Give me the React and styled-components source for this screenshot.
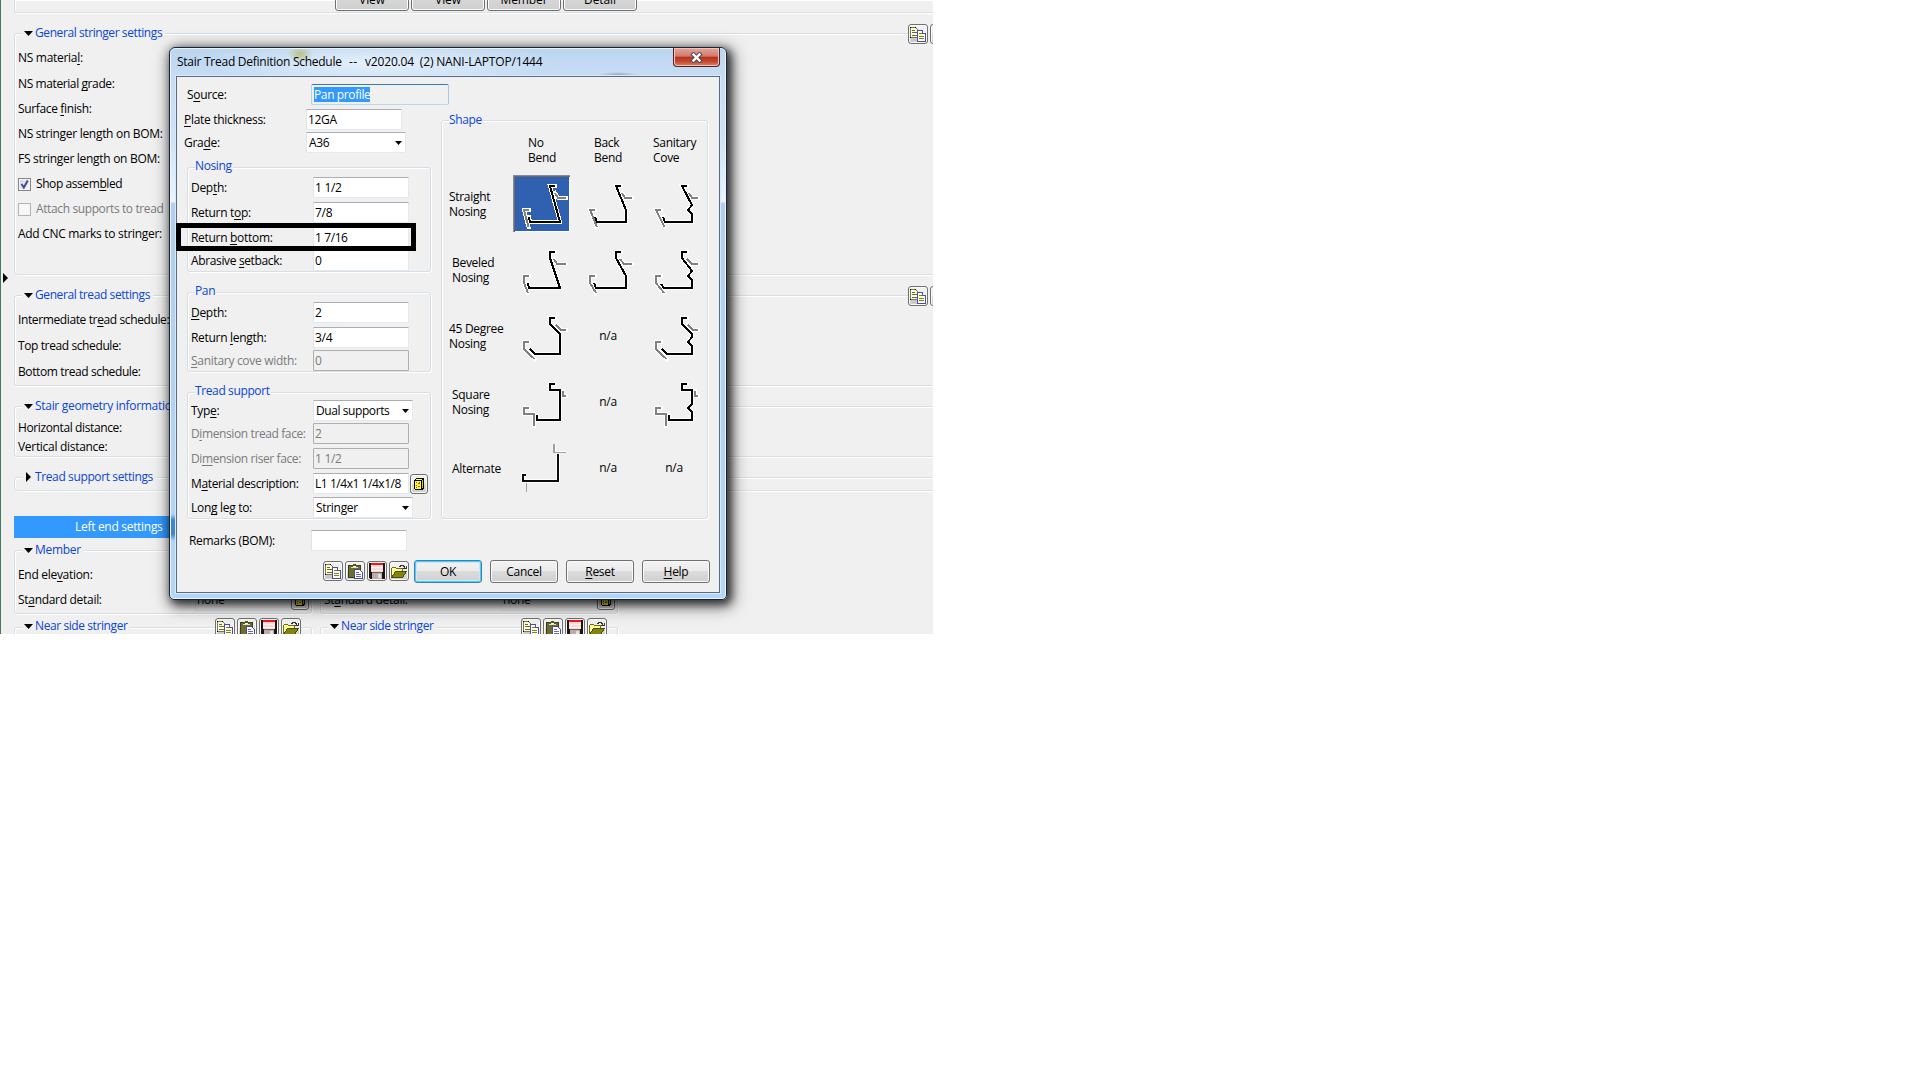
import React from "react";
import styled, { createGlobalStyle, css } from "styled-components";

const Global = createGlobalStyle`
  body { margin: 0; background: #fff; }
  #root, #root * { box-sizing: border-box; }
`;

const AppWindow = styled.main`
  position: relative;
  display: flex;
  width: 933px;
  height: 634px;
  overflow: hidden;
  background: #f0f0f0;
  border-left: 1px solid #43795c;
  font-family: "Open Sans", "Noto Sans", sans-serif;
  font-size: 12px;
  line-height: 16px;
  letter-spacing: -0.3px;
  color: #000;
  white-space: pre;
`;

const Gutter = styled.div`
  flex: 0 0 13px;
  padding: 273px 0 0 2px;
  svg { display: block; }
`;

const Content = styled.div`
  flex: 0 0 986px;
  display: flex;
  flex-direction: column;
`;

const Group = styled.section`
  flex: none;
  width: ${(p) => (p.$w ? p.$w + "px" : "auto")};
  height: ${(p) => p.$h}px;
  margin-top: ${(p) => p.$mt || 0}px;
  margin-left: ${(p) => p.$ml || 0}px;
  border: 1px solid #d5dfe5;
  border-radius: 3px;
  box-shadow: 1px 1px 0 #fff, inset 1px 1px 0 #fff;
`;

const TopPanel = styled(Group)`
  display: flex;
  align-items: flex-end;
  gap: 2px;
  border-top: 0;
  border-top-left-radius: 0;
  padding: 0 0 1px 320px;
`;

const LegendRow = styled.header`
  display: flex;
  align-items: flex-start;
  width: ${(p) => p.$w}px;
  height: 20px;
  margin-top: -10px;
`;

const SectionTitle = styled.h3`
  display: flex;
  align-items: center;
  height: ${(p) => (p.$raised ? 16 : 18)}px;
  margin: 0 0 0 7px;
  padding: 0 3px 0 2px;
  background: #f0f0f0;
  color: #0a46d5;
  font: inherit;
  letter-spacing: ${(p) => (p.$ls === undefined ? -0.41 : p.$ls)}px;
  svg { flex: none; margin-right: 2px; }
`;

const Tools = styled.div`
  display: flex;
  gap: 2px;
  margin-left: auto;
  background: #f0f0f0;
`;

const Legend = styled.h3`
  width: max-content;
  height: 16px;
  margin: ${(p) => p.$top}px 0 0 7px;
  padding: 0 1px 0 0;
  background: #f0f0f0;
  color: #0a46d5;
  font: inherit;
  letter-spacing: -0.38px;
`;

const Line = styled.div`
  display: flex;
  align-items: center;
  height: 16px;
  margin-top: ${(p) => p.$mt}px;
  padding-left: 3px;
  color: ${(p) => (p.$off ? "#7b7b7b" : "#000")};
`;

const Caption = styled.span`
  flex: none;
  width: ${(p) => (p.$w ? p.$w + "px" : "auto")};
  letter-spacing: ${(p) => (p.$ls === undefined ? "inherit" : p.$ls + "px")};
  color: ${(p) => (p.$off ? "#7b7b7b" : "inherit")};
  u { text-decoration-thickness: 1px; text-underline-offset: 2px; text-decoration-skip-ink: none; }
`;

const CheckBox = styled.span`
  display: flex;
  flex: none;
  width: 13px;
  height: 13px;
  margin-right: 5px;
  border: 1px solid ${(p) => (p.$off ? "#b4b4b4" : "#868788")};
  background: ${(p) => (p.$off ? "#f8f8f8" : "linear-gradient(135deg, #d2d6da, #fbfbfb)")};
  box-shadow: inset 0 0 0 1px #f4f4f4;
`;

const buttonFace = css`
  border: 1px solid #707070;
  border-radius: 3px;
  background: linear-gradient(#f3f3f3 0%, #ebebeb 49%, #dcdcdc 50%, #cfcfcf 100%);
  box-shadow: inset 0 0 0 1px #fbfbfb;
`;

const PushButton = styled.button`
  ${buttonFace}
  display: block;
  flex: none;
  width: 68px;
  height: 23px;
  padding: 0;
  font: inherit;
  letter-spacing: -0.28px;
  color: #000;
  u { text-decoration-thickness: 1px; text-underline-offset: 2px; }
  ${(p) => p.$primary && css`
    border-color: #3c7fb1;
    box-shadow: inset 0 0 0 1px #48d0f8, inset 0 0 0 2px #c5e9f7;
  `}
`;

const ViewButton = styled.button`
  ${buttonFace}
  flex: none;
  display: flex;
  align-items: flex-end;
  justify-content: center;
  width: 74px;
  height: 38px;
  padding: 0 0 2px;
  font: inherit;
  letter-spacing: -0.1px;
  color: #000;
`;

const ToolButton = styled.button`
  ${buttonFace}
  display: flex;
  flex: none;
  align-items: center;
  justify-content: center;
  width: ${(p) => p.$w || 20}px;
  height: 20px;
  margin-left: ${(p) => p.$ml || 0}px;
  padding: 0;
  overflow: hidden;
  svg { flex: none; }
`;

const Field = styled.div`
  display: flex;
  flex: none;
  align-items: center;
  width: ${(p) => p.$w || 96}px;
  height: 21px;
  padding: 0 1px 0 ${(p) => p.$pl || 1}px;
  background: #fff;
  border: 1px solid #e3e9ef;
  border-top-color: #abadb3;
  border-left-color: #e2e3ea;
  border-radius: 1px;
  ${(p) => p.$off && css`
    background: #f0f0f0;
    border-color: #afafaf;
    color: #7b7b7b;
  `}
  ${(p) => p.$plain && css`
    background: #f0f0f0;
    border-color: #e2e6ea;
  `}
  ${(p) => p.$focus && css`
    background: #f0f0f0;
    border-color: #3d7bad #a4c9e3 #b7d9ed #b5cfe7;
    border-radius: 2px;
  `}
  svg { margin-left: auto; margin-right: 2px; flex: none; }
`;

const Selected = styled.span`
  height: 15px;
  line-height: 15px;
  letter-spacing: -0.38px;
  background: #3399ff;
  color: #fff;
`;

const EndColumns = styled.div`
  display: flex;
  gap: 8px;
  margin-top: 25px;
`;

const EndColumn = styled.div`
  flex: 0 0 298px;
  display: flex;
  flex-direction: column;
`;

const EndBar = styled.div`
  height: 22px;
  padding: 3px 0 0 61px;
  background: #3399ff;
  color: #fff;
`;

const Dialog = styled.div`
  position: absolute;
  left: 168px;
  top: 47px;
  width: 558px;
  height: 553px;
  display: flex;
  flex-direction: column;
  padding: 0 6px 6px;
  border: 1px solid #1b2433;
  border-radius: 6px 6px 5px 5px;
  background:
    linear-gradient(#fff0 0, #fff0 466px, #3f86ca 472px, #3f86ca 486px, #fff0 493px) 0 0 / 6px 100% no-repeat,
    radial-gradient(ellipse 13px 9px at 130px 6px, #b9c08a 0, #b9c08a00 100%),
    radial-gradient(ellipse 180px 22px at 210px 15px, #e6f1fc 0, #e6f1fc00 100%),
    radial-gradient(ellipse 20px 3px at 448px 27px, #8fa9c4 0, #8fa9c400 100%),
    linear-gradient(#bcd6f0 0, #c5dcf4 28px, #cfe2f6 90px, #edf4fb 154px, #b1d0f0 155px, #b3d5f9 100%);
  box-shadow: inset 0 0 0 1px #e8f4ff, 3px 3px 8px 1px rgba(0, 0, 0, 0.65), 3px 4px 16px 3px rgba(0, 0, 0, 0.5);
`;

const TitleBar = styled.div`
  display: flex;
  flex: 0 0 28px;
  justify-content: space-between;
  padding-left: 1px;
`;

const Title = styled.h2`
  display: flex;
  margin: 6px 0 0;
  font: inherit;
  letter-spacing: -0.17px;
`;

const CloseButton = styled.button`
  display: flex;
  align-items: center;
  justify-content: center;
  width: 47px;
  height: 19px;
  padding: 0;
  border: 1px solid #571f22;
  border-top: 0;
  border-radius: 0 0 4px 4px;
  background: linear-gradient(#e3a69c 0%, #d2796d 46%, #b8311c 50%, #c3482f 75%, #d98468 100%);
  box-shadow: inset 0 0 0 1px #f0c3b8;
`;

const Client = styled.div`
  display: flex;
  flex: 1;
  flex-direction: column;
  border: 1px solid #5c6b80;
  background: #f0f0f0;
  box-shadow: 0 0 0 1px #d8e9fa;
`;

const Body = styled.div`
  display: flex;
`;

const FormColumn = styled.div`
  flex: 0 0 264px;
  min-width: 0;
  padding-top: 7px;
`;

const FormRow = styled.div`
  display: flex;
  align-items: center;
  height: 21px;
  margin-top: ${(p) => p.$mt || 0}px;
  padding-left: ${(p) => (p.$pl === undefined ? 3 : p.$pl)}px;
`;

const Highlight = styled.div`
  position: absolute;
  left: 6px;
  top: 175px;
  width: 240px;
  height: 28px;
  border: 5px solid #000;
`;

const Footer = styled.div`
  display: flex;
  gap: 8px;
  margin-top: 9px;
  padding-left: 146px;
`;

const FooterTools = styled.div`
  display: flex;
  gap: 2px;
  margin-right: -3px;
  padding-top: 1px;
`;

const ShapeHead = styled.div`
  display: grid;
  grid-template-columns: 67px repeat(3, 66px);
  margin-top: 7px;
  line-height: 15px;
`;

const HeadCell = styled.div`
  padding-left: ${(p) => p.$pl}px;
`;

const ShapeGrid = styled.div`
  display: grid;
  grid-template-columns: 67px repeat(3, 66px);
  grid-auto-rows: 66px;
  margin-top: 6px;
  line-height: 15px;
`;

const RowName = styled.div`
  align-self: center;
  padding-left: ${(p) => p.$pl}px;
`;

const ShapeCell = styled.div`
  display: flex;
  padding: 4px;
`;

const NotAvailable = styled.div`
  align-self: center;
  justify-self: center;
  padding-bottom: 1px;
`;

const ShapeButton = styled.div`
  width: 57px;
  height: 57px;
  ${(p) => p.$on && css`
    background: #3060b0;
    box-shadow: inset 1px 1px 0 #8b8b8b, inset 2px 2px 0 #6a6a6a, inset -1px -1px 0 #fff;
  `}
  svg { display: block; }
`;

const mnemonic = (text) => {
  const i = text.indexOf("&");
  if (i < 0) return text;
  return <>{text.slice(0, i)}<u>{text[i + 1]}</u>{text.slice(i + 2)}</>;
};

const DownMark = () => (
  <svg width="9" height="5" viewBox="0 0 9 5"><path d="M0 0h9L4.500 5z" /></svg>
);
const RightMark = ({ w = 9 }) => (
  <svg width={w} height="10" viewBox={w === 9 ? "-2 0 9 10" : "0 0 5 10"}><path d="M0 0l5 5-5 5z" /></svg>
);
const SelectMark = () => (
  <svg width="7" height="4" viewBox="0 0 7 4"><path d="M0 0h7L3.500 4z" /></svg>
);

const CopyIcon = () => (
  <svg width="18" height="18" viewBox="1 1 18 18" shapeRendering="crispEdges">
    <path d="M3 13h7v4H3z" fill="#c8c8d0" />
    <path d="M2.500 3.500h5l3 3v7h-8z" fill="#ffffc8" stroke="#77775a" />
    <path d="M2 3h1v1H2zM7 3h1v1H7zM2 13h1v1H2z" fill="#000" />
    <path d="M4 6.500h3M4 8.500h5M4 11.500h5" stroke="#66665a" />
    <path d="M9.500 6.500h5l3 3v8h-8z" fill="#ffffc8" stroke="#4a4ab8" />
    <path d="M14.500 6.500v3h3" fill="#fff" stroke="#4a4ab8" />
    <path d="M11 9.500h3M11 12.500h5M11 14.500h5" stroke="#77775a" />
  </svg>
);
const PasteIcon = () => (
  <svg width="18" height="18" viewBox="1 1 18 18" shapeRendering="crispEdges">
    <path d="M3.500 4.500h12v12h-12z" fill="#6c6c38" stroke="#3c3c18" />
    <path d="M6 5h7v2H6z" fill="#e8e8a0" />
    <path d="M6 4h2V2.500h3V4h2v2H6z" fill="#55552a" />
    <path d="M8 5h3v1H8z" fill="#ffffb0" />
    <path d="M9.500 8.500h5l3 3v6h-8z" fill="#fff" stroke="#4a4a9a" />
    <path d="M11 11.500h3M11 13.500h5M11 15.500h5" stroke="#6a6ab8" />
  </svg>
);
const SaveIcon = () => (
  <svg width="18" height="18" viewBox="1 1 18 18" shapeRendering="crispEdges">
    <path d="M2 2h16v16H3l-1-1z" fill="#1c1414" />
    <path d="M4 3h12v8H4z" fill="#ffd8d8" />
    <path d="M4 2h12v1.500H4z" fill="#f01818" />
    <path d="M4 6h12M4 9h12" stroke="#fff0f0" />
    <path d="M5 12h10v6H5z" fill="#b8b0a8" />
    <path d="M11 13h3v4h-3z" fill="#e4e0dc" />
    <path d="M5 11.500h10" stroke="#70605c" />
  </svg>
);
const OpenIcon = () => (
  <svg width="18" height="18" viewBox="1 1 18 18" shapeRendering="crispEdges">
    <path d="M2.500 15.500v-8l1-1h3l1 1h6v3" fill="#ffff90" stroke="#6c6c20" />
    <path d="M2.500 16.500l4-6h11l-4 6z" fill="#84840c" stroke="#4c4c08" />
    <path d="M10 5.500h1v-1h3v1h1v1h1" fill="none" stroke="#333" />
    <path d="M14 7h3V4.500" fill="none" stroke="#333" />
  </svg>
);
const BookIcon = () => (
  <svg width="12" height="14" viewBox="0 0 12 14" shapeRendering="crispEdges">
    <path d="M1 3l2-2h7l1 1v9l-2 2H2l-1-1z" fill="#000" />
    <path d="M2 4h6v8H2z" fill="#ffff30" />
    <path d="M3 2h6v1H3z" fill="#ffff60" />
    <path d="M9 3h1v8H9z" fill="#d8c800" />
    <path d="M3 5h1v1H3zM6 5h1v1H6zM3 8h1v1H3zM3 10h1v1H3z" fill="#806000" />
    <path d="M5 6h2v1H5zM5 9h2v1H5z" fill="#e04020" />
  </svg>
);
const CloseIcon = () => (
  <svg width="13" height="11" viewBox="0 0 13 11">
    <path d="M3.500 2.500l6 6M9.500 2.500l-6 6" stroke="#4f4a58" strokeWidth="4.400" strokeLinecap="square" />
    <path d="M3.500 2.500l6 6M9.500 2.500l-6 6" stroke="#fff" strokeWidth="2.400" strokeLinecap="square" />
  </svg>
);
const CheckIcon = () => (
  <svg width="11" height="11" viewBox="0 0 11 11">
    <path d="M2.500 5l2.300 3.500L8.800 1.500" fill="none" stroke="#3c4f96" strokeWidth="2" />
  </svg>
);

const fileTools = [CopyIcon, PasteIcon, SaveIcon, OpenIcon];
const FileButtons = () => fileTools.map((Icon, i) => <ToolButton key={i}><Icon /></ToolButton>);

const Profile = ({ body, nose, leg }) => (
  <svg width="57" height="57" viewBox="0 0 57 57" fill="none" shapeRendering="crispEdges">
    <g stroke="#fff" strokeWidth="4" strokeLinecap="square">
      <polyline points={nose} /><polyline points={leg} /><polyline points={body} />
    </g>
    <g stroke="#808080" strokeWidth="2"><polyline points={nose} /><polyline points={leg} /></g>
    <polyline points={body} stroke="#000" strokeWidth="2" />
  </svg>
);

const AlternateProfile = () => (
  <svg width="57" height="57" viewBox="0 0 57 57" fill="none" shapeRendering="crispEdges">
    <path d="M45 15v27H10v-6h3" stroke="#fff" strokeWidth="4" />
    <path d="M42 5v7h11" stroke="#fff" />
    <path d="M41 5v8.500h12M13.500 44v9" stroke="#9aa2ae" strokeWidth="1.500" />
    <path d="M45 15v27H9.500v-6h3.500" stroke="#0c0c0c" strokeWidth="2" />
  </svg>
);

const beveledNose = "16,35 11,35 11,42 ";
const shapeRows = [
  { name: "Straight\nNosing", pl: 7, cells: [
    { on: true, body: "42,11 37,11 47,47 17,47 16,42", nose: "16,35 11,35 15.500,52", leg: "42,18 45,23 53,23" },
    { body: "42,11 37,11 47,35 47,47 18,47 16,42", nose: "16,35 11,35 18,52", leg: "43,18 46,23 53,23" },
    { body: "42,11 37,11 47,30 43,35 47,39 47,47 20,47 18,42", nose: "16,35 11,35 19.500,52", leg: "44,18 47,23 53,23" },
  ] },
  { name: "Beveled\nNosing", pl: 10, cells: [
    { body: "42,11 37,11 37,17 47,47 16,47 15,42", nose: beveledNose + "15,52", leg: "41,18 44,23 53,23" },
    { body: "42,11 37,11 37,17 47,35 47,47 17,47 15,42", nose: beveledNose + "17,52", leg: "41,18 45,23 53,23" },
    { body: "42,11 37,11 37,17 47,30 43,35 47,39 47,47 19,47 16,43", nose: beveledNose + "19,52", leg: "42,18 47,23 53,23" },
  ] },
  { name: "45 Degree\nNosing", pl: 7, cells: [
    { body: "42,11 37,11 37,17 47,27 47,47 22,47 17,42", nose: beveledNose + "21.500,52", leg: "43,18 48,23 53,23" },
    null,
    { body: "42,11 37,11 37,17 47,27 47,30 43,35 47,39 47,47 22,47 17,42", nose: beveledNose + "21.500,52", leg: "43,18 48,23 53,23" },
  ] },
  { name: "Square\nNosing", pl: 10, cells: [
    { body: "42,11 37,11 37,17 47,17 47,47 24,47 24,42", nose: "16,35 11,35 11,41 21,41 21,53", leg: "50,18 50,23 53,23" },
    null,
    { body: "42,11 37,11 37,17 47,17 47,31 43,35 47,39 47,47 24,47 24,42", nose: "16,35 11,35 11,41 21,41 21,53", leg: "50,18 50,23 53,23" },
  ] },
  { name: "Alternate", pl: 10, cells: [{ alternate: true }, null, null] },
];

const Section = ({ title, h, mt, w, rowWidth, closed, tools, raised, ls, children }) => (
  <Group $h={h} $mt={mt} $w={w}>
    <LegendRow $w={rowWidth || 979}>
      <SectionTitle $raised={raised} $ls={ls}>{closed ? <RightMark /> : <DownMark />}{title}</SectionTitle>
      {tools && <Tools><FileButtons /></Tools>}
    </LegendRow>
    {children}
  </Group>
);

const Item = ({ mt, children, ls }) => (
  <Line $mt={mt}><Caption $ls={ls}>{mnemonic(children)}</Caption></Line>
);

const Entry = ({ label, value, mt, off, select, extra, ls, valueLs }) => (
  <FormRow $mt={mt}>
    <Caption $w={122} $off={off} $ls={ls}>{mnemonic(label)}</Caption>
    <Field $off={off} $w={select ? 100 : 96} $pl={select ? 2 : 1}>
      <Caption $ls={valueLs}>{value}</Caption>{select && <SelectMark />}
    </Field>
    {extra}
  </FormRow>
);

const EndSettings = ({ title }) => (
  <EndColumn>
    <EndBar>{title}</EndBar>
    <Section title="Member" h={64} mt={12} w={298} rowWidth={286} ls={-0.3}>
      <Item mt={6}>End ele&vation:</Item>
      <Line $mt={9}>
        <Caption $w={177}>{mnemonic("St&andard detail:")}</Caption>
        <Field $plain>none</Field>
        <ToolButton $w={18}><BookIcon /></ToolButton>
      </Line>
    </Section>
    <Section title="Near side stringer" h={90} mt={13} w={298} rowWidth={286} tools raised />
  </EndColumn>
);

export default function App() {
  return (
    <>
      <Global />
      <AppWindow>
        <Gutter><RightMark w={5} /></Gutter>
        <Content>
          <TopPanel $h={13}>
            {["View", "View", "Member", "Detail"].map((t, i) => <ViewButton key={i}>{t}</ViewButton>)}
          </TopPanel>
          <Section title="General stringer settings" h={242} mt={20} tools>
            <Item mt={6}>NS materia&l:</Item>
            <Item mt={10} ls={-0.4}>NS material &grade:</Item>
            <Item mt={9} ls={-0.36}>Surface &finish:</Item>
            <Item mt={9}>NS stringer length on BOM:</Item>
            <Item mt={9}>FS stringer length on BOM:</Item>
            <Line $mt={9}><CheckBox><CheckIcon /></CheckBox><Caption $ls={-0.42}>{mnemonic("Shop assem&bled")}</Caption></Line>
            <Line $mt={9} $off><CheckBox $off /><Caption $ls={-0.38}>Attach supports to tread</Caption></Line>
            <Item mt={9}>Add CNC marks to stringer:</Item>
          </Section>
          <Section title="General tread settings" h={91} mt={20} tools>
            <Item mt={6} ls={-0.38}>Intermediate tr&ead schedule:</Item>
            <Item mt={10} ls={-0.39}>Top tread schedule:</Item>
            <Item mt={10} ls={-0.39}>Bottom tread schedule:</Item>
          </Section>
          <Section title="Stair geometry information" h={51} mt={20} ls={-0.3}>
            <Item mt={3} ls={-0.38}>Horizontal distance:</Item>
            <Item mt={3}>Vertical distance:</Item>
          </Section>
          <Section title="Tread support settings" h={14} mt={20} closed ls={-0.38} />
          <EndColumns>
            <EndSettings title="Left end settings" />
            <EndSettings title="Right end settings" />
          </EndColumns>
        </Content>

        <Dialog>
          <TitleBar>
            <Title>
              <Caption $w={172} $ls={-0.26}>Stair Tread Definition Schedule</Caption>
              <Caption $w={16} $ls={0.5}>--</Caption>
              <Caption>{"v2020.04  (2) NANI-LAPTOP/1444"}</Caption>
            </Title>
            <CloseButton><CloseIcon /></CloseButton>
          </TitleBar>
          <Client>
            <Body>
              <FormColumn>
                <FormRow $pl={10}>
                  <Caption $w={124}>{mnemonic("S&ource:")}</Caption>
                  <Field $focus $w={138} $pl={2}><Selected>Pan profile</Selected></Field>
                </FormRow>
                <FormRow $mt={4} $pl={7}>
                  <Caption $w={122}>{mnemonic("&Plate thickness:")}</Caption>
                  <Field>12GA</Field>
                </FormRow>
                <FormRow $mt={2} $pl={7}>
                  <Caption $w={122}>{mnemonic("Gra&de:")}</Caption>
                  <Field $w={100} $pl={2}>A36<SelectMark /></Field>
                </FormRow>
                <Group $h={105} $w={244} $mt={14} $ml={10}>
                  <Legend $top={-10}>Nosing</Legend>
                  <Entry mt={3} label="Dep&th:" value="1 1/2" />
                  <Entry mt={4} label="Return t&op:" value="7/8" />
                  <Entry mt={4} label="Return &bottom:" value="1 7/16" valueLs={-0.4} />
                  <Entry mt={2} label="Abrasive &setback:" value="0" ls={-0.36} />
                </Group>
                <Group $h={80} $w={244} $mt={20} $ml={10}>
                  <Legend $top={-10}>Pan</Legend>
                  <Entry mt={3} label="&Depth:" value="2" />
                  <Entry mt={4} label="Return &length:" value="3/4" />
                  <Entry mt={2} label="&Sanitary cove width:" value="0" off />
                </Group>
                <Group $h={127} $w={244} $mt={20} $ml={10}>
                  <Legend $top={-10}>Tread support</Legend>
                  <Entry mt={1} label="Typ&e:" value="Dual supports" select valueLs={-0.42} />
                  <Entry mt={2} label="D&imension tread face:" value="2" off ls={-0.39} />
                  <Entry mt={4} label="Di&mension riser face:" value="1 1/2" off ls={-0.39} />
                  <Entry mt={4} label="M&aterial description:" value="L1 1/4x1 1/4x1/8" ls={-0.36} valueLs={-0.45}
                    extra={<ToolButton $w={18} $ml={1}><BookIcon /></ToolButton>} />
                  <Entry mt={3} label="Lon&g leg to:" value="Stringer" select />
                </Group>
                <FormRow $mt={11} $pl={12}>
                  <Caption $w={122}>Remarks (BOM):</Caption>
                  <Field />
                </FormRow>
              </FormColumn>
              <Group $h={399} $w={267} $mt={43}>
                <Legend $top={-9}>Shape</Legend>
                <ShapeHead>
                  <HeadCell />
                  <HeadCell $pl={19}>{"No\nBend"}</HeadCell>
                  <HeadCell $pl={19}>{"Back\nBend"}</HeadCell>
                  <HeadCell $pl={12}>{"Sanitary\nCove"}</HeadCell>
                </ShapeHead>
                <ShapeGrid>
                  {shapeRows.map((row) => (
                    <React.Fragment key={row.name}>
                      <RowName $pl={row.pl}>{row.name}</RowName>
                      {row.cells.map((cell, i) => cell ? (
                        <ShapeCell key={i}>
                          <ShapeButton $on={cell.on}>
                            {cell.alternate ? <AlternateProfile /> : <Profile {...cell} />}
                          </ShapeButton>
                        </ShapeCell>
                      ) : <NotAvailable key={i}>n/a</NotAvailable>)}
                    </React.Fragment>
                  ))}
                </ShapeGrid>
              </Group>
            </Body>
            <Footer>
              <FooterTools><FileButtons /></FooterTools>
              <PushButton $primary>OK</PushButton>
              <PushButton>Cancel</PushButton>
              <PushButton>{mnemonic("&Reset")}</PushButton>
              <PushButton>{mnemonic("&Help")}</PushButton>
            </Footer>
          </Client>
          <Highlight />
        </Dialog>
      </AppWindow>
    </>
  );
}
